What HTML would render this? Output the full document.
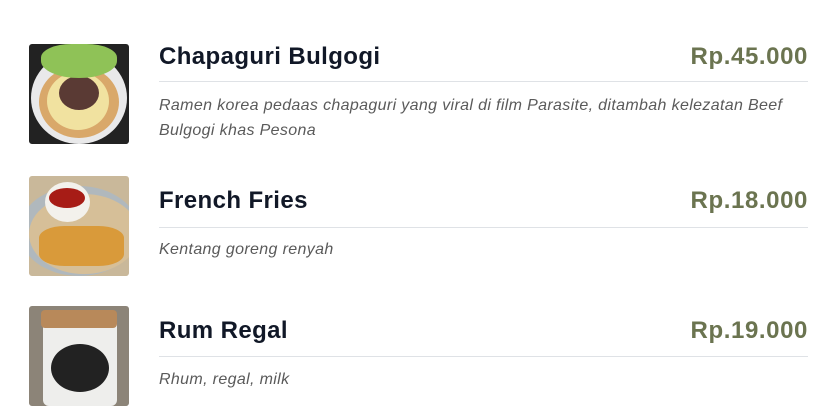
<!DOCTYPE html>
<html><head><meta charset="utf-8"><style>
body{margin:0;background:#fff;font-family:"Liberation Sans",sans-serif;width:828px;height:414px;overflow:hidden;position:relative}
.img{position:absolute;left:29px;width:100px;height:100px;border-radius:3px;overflow:hidden}
.t{position:absolute;left:159px;font-size:24px;font-weight:bold;color:#111827;line-height:28px;letter-spacing:0.4px}
.p{position:absolute;right:20px;font-size:24px;font-weight:bold;color:#6b7450;line-height:28px;letter-spacing:0.6px}
.hr{position:absolute;left:159px;width:649px;height:1px;background:#dfe2e6}
.d{position:absolute;left:159px;width:652px;font-size:16px;font-style:italic;color:#5a5a5a;line-height:25px;letter-spacing:0.35px}
</style></head><body>
<div class="img" style="top:44px;background:#222">
 <div style="position:absolute;left:2px;top:8px;width:96px;height:92px;border-radius:50%;background:#e9e9ea"></div>
 <div style="position:absolute;left:10px;top:22px;width:80px;height:72px;border-radius:50%;background:#d9a86a"></div>
 <div style="position:absolute;left:18px;top:28px;width:62px;height:58px;border-radius:50%;background:#f1e2a0"></div>
 <div style="position:absolute;left:30px;top:32px;width:40px;height:34px;border-radius:50%;background:#5a3a34"></div>
 <div style="position:absolute;left:12px;top:0;width:76px;height:34px;border-radius:40% 40% 50% 50%;background:#8fc257"></div>
</div>
<div class="img" style="top:176px;background:#c9b89a">
 <div style="position:absolute;left:-10px;top:10px;width:120px;height:90px;border-radius:50%;background:#b0b8bd"></div>
 <div style="position:absolute;left:0px;top:18px;width:110px;height:80px;border-radius:50%;background:#d6bf98"></div>
 <div style="position:absolute;left:10px;top:50px;width:85px;height:40px;border-radius:30%;background:#d99a3a"></div>
 <div style="position:absolute;left:16px;top:6px;width:45px;height:40px;border-radius:50%;background:#f3f1ec"></div>
 <div style="position:absolute;left:20px;top:12px;width:36px;height:20px;border-radius:50%;background:#a71c16"></div>
</div>
<div class="img" style="top:306px;background:#8c8478">
 <div style="position:absolute;left:14px;top:12px;width:74px;height:88px;border-radius:6px;background:#eeeeec"></div>
 <div style="position:absolute;left:12px;top:4px;width:76px;height:18px;background:#b8895a;border-radius:4px"></div>
 <div style="position:absolute;left:22px;top:38px;width:58px;height:48px;border-radius:50%;background:#222"></div>
</div>
<div class="t" style="top:43px">Chapaguri Bulgogi</div><div class="p" style="top:43px">Rp.45.000</div>
<div class="hr" style="top:81px"></div>
<div class="d" style="top:93px">Ramen korea pedaas chapaguri yang viral di film Parasite, ditambah kelezatan Beef Bulgogi khas Pesona</div>
<div class="t" style="top:187px">French Fries</div><div class="p" style="top:187px">Rp.18.000</div>
<div class="hr" style="top:227px"></div>
<div class="d" style="top:237px">Kentang goreng renyah</div>
<div class="t" style="top:317px">Rum Regal</div><div class="p" style="top:317px">Rp.19.000</div>
<div class="hr" style="top:356px"></div>
<div class="d" style="top:367px">Rhum, regal, milk</div>
</body></html>
